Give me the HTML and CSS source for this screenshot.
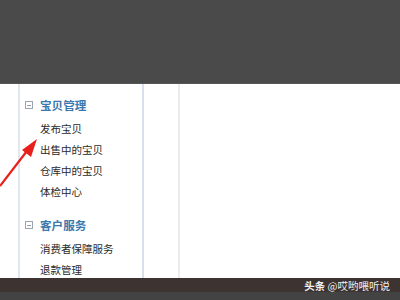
FILE: index.html
```html
<!DOCTYPE html>
<html lang="zh">
<head>
<meta charset="utf-8">
<link rel="stylesheet" href="styles.css">
</head>
<body>
<div class="top"></div>
<div class="main">
  <div class="gutter"></div>
  <nav class="sidebar">
    <div class="section">
      <div class="head"><span class="toggle"></span>宝贝管理</div>
      <ul class="items">
        <li>发布宝贝</li>
        <li>出售中的宝贝</li>
        <li>仓库中的宝贝</li>
        <li>体检中心</li>
      </ul>
    </div>
    <div class="section">
      <div class="head"><span class="toggle"></span>客户服务</div>
      <ul class="items">
        <li>消费者保障服务</li>
        <li>退款管理</li>
      </ul>
    </div>
  </nav>
  <div class="spacer"></div>
  <div class="content"></div>
</div>
<div class="footer">
  <div class="strip"><span class="mark"><b>头条</b> @哎哟喂听说</span></div>
  <div class="taskbar"></div>
</div>
<svg class="arrow" width="60" height="70" viewBox="0 0 60 70">
  <line x1="0" y1="56" x2="30" y2="17" stroke="#e8201c" stroke-width="2.2"/>
  <polygon points="37,9 22,20 31,27" fill="#e8201c"/>
</svg>
</body>
</html>
```
FILE: styles.css
```css
html, body {
  margin: 0;
  padding: 0;
  width: 400px;
  height: 300px;
  overflow: hidden;
  background: #fff;
  font-family: "Noto Sans CJK SC", "Noto Sans", sans-serif;
}
.top {
  height: 84px;
  background: #4a4a4a;
  border-bottom: 1px solid #555;
  box-sizing: border-box;
}
.main {
  display: flex;
  height: 194px;
  overflow: hidden;
}
.gutter {
  width: 18px;
  flex: none;
}
.sidebar {
  width: 122px;
  flex: none;
  border-left: 2px solid #e1e7ef;
  border-right: 2px solid #d6e1ed;
  padding-top: 11px;
}
.section + .section {
  margin-top: 13px;
}
.head {
  display: flex;
  align-items: center;
  height: 20px;
  padding-left: 5px;
  font-size: 11.6px;
  font-weight: bold;
  color: #3a78ad;
}
.toggle {
  width: 6px;
  height: 6px;
  border: 1px solid #9aa5b1;
  margin-right: 7px;
  position: relative;
}
.toggle::after {
  content: "";
  position: absolute;
  left: 1px;
  right: 1px;
  top: 2.5px;
  height: 1px;
  background: #9aa5b1;
}
.items {
  list-style: none;
  margin: 3px 0 0 0;
  padding: 0 0 0 20px;
}
.items li {
  height: 21px;
  line-height: 21px;
  font-size: 10.5px;
  color: #2a2a2a;
}
.spacer {
  width: 34px;
  flex: none;
  border-right: 2px solid #ececec;
}
.content {
  flex: 1;
}
.footer {
  height: 22px;
  display: flex;
  flex-direction: column;
}
.strip {
  height: 14px;
  background: #3d3330;
  display: flex;
  justify-content: flex-end;
  align-items: center;
  padding-right: 10px;
}
.mark {
  font-size: 10.5px;
  color: #f2f2f2;
  line-height: 14px;
  margin-top: 2px;
}
.taskbar {
  flex: 1;
  background: #434343;
}
.arrow {
  position: absolute;
  left: 0;
  top: 130px;
}
```
